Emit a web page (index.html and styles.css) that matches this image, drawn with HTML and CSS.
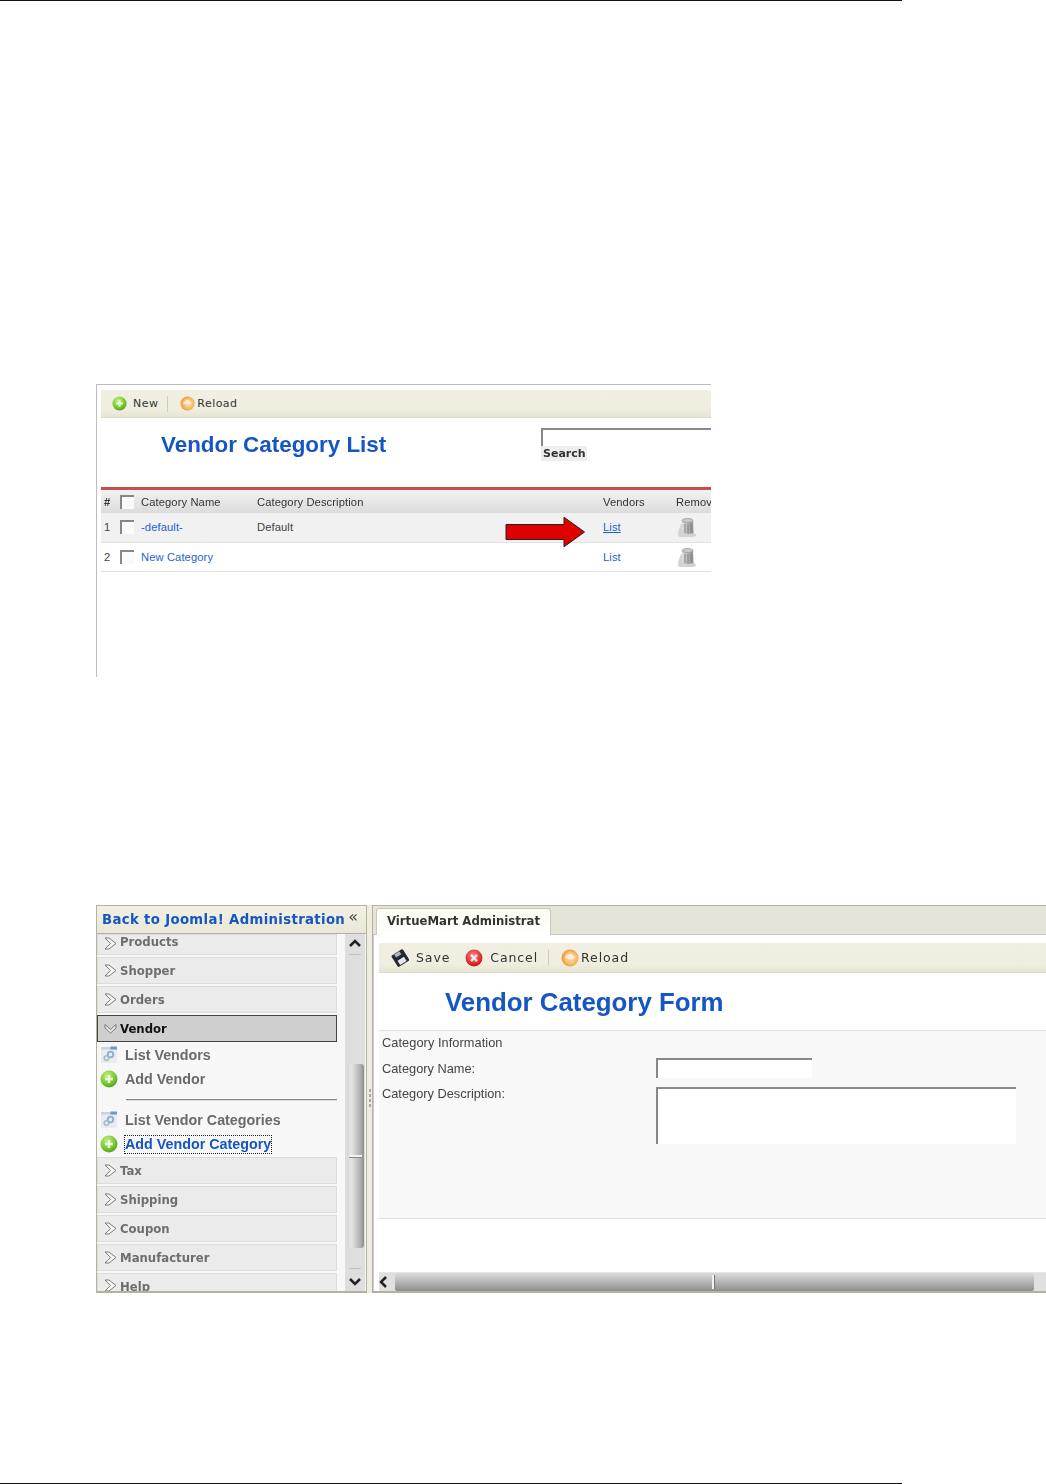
FILE: index.html
```html
<!DOCTYPE html>
<html lang="en">
<head>
<meta charset="utf-8">
<title>Vendor Category</title>
<link rel="stylesheet" href="styles.css">
</head>
<body>
<svg class="defs" width="0" height="0" aria-hidden="true">
  <defs>
    <radialGradient id="gGreen" cx="40%" cy="30%" r="75%"><stop offset="0" stop-color="#c4ee8c"/><stop offset=".6" stop-color="#7ccb2e"/><stop offset="1" stop-color="#4f9f18"/></radialGradient>
    <radialGradient id="gOrange" cx="55%" cy="50%" r="60%"><stop offset="0" stop-color="#fbe3c0"/><stop offset=".55" stop-color="#f8c070"/><stop offset="1" stop-color="#ee8a14"/></radialGradient>
    <radialGradient id="gRed" cx="45%" cy="35%" r="70%"><stop offset="0" stop-color="#f28a8a"/><stop offset=".7" stop-color="#dc2c2c"/><stop offset="1" stop-color="#b01414"/></radialGradient>
    <linearGradient id="gCan" x1="0" x2="1" y1="0" y2="0"><stop offset="0" stop-color="#dcdddc"/><stop offset=".55" stop-color="#b4b6b4"/><stop offset="1" stop-color="#8c8e8c"/></linearGradient>
    <symbol id="i-add" viewBox="0 0 16 16"><circle cx="8" cy="8" r="7.500" fill="url(#gGreen)"/><path d="M8 4.500v7M4.500 8h7" stroke="#eef9df" stroke-width="2.200"/></symbol>
    <symbol id="i-reload" viewBox="0 0 16 16"><circle cx="8" cy="8" r="7.500" fill="url(#gOrange)"/><path d="M3.500 8.500a4.500 4.500 0 0 1 6-4l3 3.500-3.500 1z" fill="#fdf1e0" opacity=".8"/></symbol>
    <symbol id="i-cancel" viewBox="0 0 16 16"><circle cx="8" cy="8" r="7.500" fill="url(#gRed)"/><path d="M5.300 5.300l5.400 5.400M10.700 5.300l-5.400 5.400" stroke="#fbe4e4" stroke-width="2.200"/></symbol>
    <symbol id="i-save" viewBox="0 0 18 18"><g transform="rotate(-32 9 9)"><rect x="2.500" y="2.500" width="13.500" height="13.500" rx="1.500" fill="#26292d"/><rect x="6" y="3" width="6" height="3.500" fill="#aeb7c1"/><rect x="5.500" y="10" width="7.500" height="5" fill="#e4e8ed"/></g></symbol>
    <symbol id="i-list" viewBox="0 0 18 18"><rect x="1" y="1" width="16" height="16" rx="1" fill="#e9ebee"/><rect x="1" y="1" width="16" height="2.500" fill="#cdd2d9"/><rect x="10.500" y="0.500" width="6.500" height="3" fill="#6b9bd0"/><circle cx="10.500" cy="8.500" r="2.800" fill="none" stroke="#8eabc8" stroke-width="1.800"/><circle cx="6.500" cy="12" r="2.300" fill="none" stroke="#a5bbd1" stroke-width="1.600"/></symbol>
    <symbol id="i-trash" viewBox="0 0 20 20"><path d="M1 17c0-3 2-8 4-11l1 10 10-.5 3 2c.5 1.500-1 2.500-3 2.500H3C1.500 20 1 18.500 1 17z" fill="#d2d3d2"/><path d="M5 3.500c2-2.500 9-2.500 11 0L16.500 16c-3 1.500-8 1.500-11 0z" fill="url(#gCan)"/><ellipse cx="10.500" cy="3.500" rx="5.500" ry="2" fill="#c8c9c8" stroke="#939593" stroke-width=".7"/><path d="M8 7v9M11 7v9.500M14 7v8.500" stroke="#7b7d7b" stroke-width=".9"/></symbol>
    <symbol id="i-chev" viewBox="0 0 13 13"><path d="M1 1h4l7 5.500-7 5.500H1l5.500-5.500z" fill="#f6f6f6" stroke="#6f6f6f" stroke-width=".9"/></symbol>
    <symbol id="i-chevd" viewBox="0 0 13 13"><path d="M1 2.500v3.500l5.500 5 5.500-5V2.500L6.500 7.500z" fill="#e8e8e8" stroke="#6f6f6f" stroke-width=".9"/></symbol>
  </defs>
</svg>

<div class="page">
  <header class="page-rule"></header>

  <section class="shot shot-list">
    <div class="toolbar list-toolbar">
      <span class="tool"><svg class="ico16"><use href="#i-add"/></svg><span class="tool-text">New</span></span>
      <span class="sep"></span>
      <span class="tool tool-tight"><svg class="ico16"><use href="#i-reload"/></svg><span class="tool-text">Reload</span></span>
    </div>
    <div class="list-head">
      <h1 class="title list-title">Vendor Category List</h1>
      <div class="search">
        <span class="field search-field"></span>
        <span class="search-label">Search</span>
      </div>
    </div>
    <div class="grid-table">
      <div class="row row-head">
        <span class="c-num"><b>#</b></span><span class="c-check"><i class="check"></i></span><span class="c-name">Category Name</span><span class="c-desc">Category Description</span><span class="c-vend">Vendors</span><span class="c-rem">Remov</span>
      </div>
      <div class="row row-odd">
        <span class="c-num">1</span><span class="c-check"><i class="check"></i></span><span class="c-name link">-default-</span><span class="c-desc">Default</span>
        <span class="c-vend link under">List</span><span class="c-rem"><svg class="trash"><use href="#i-trash"/></svg></span>
        <svg class="arrow" viewBox="0 0 80 32"><path d="M.5 8.500h58V1.200L79 16 58.500 30.800V23.500H.5z" fill="#e00000" stroke="#222" stroke-width="1"/></svg>
      </div>
      <div class="row row-even">
        <span class="c-num">2</span><span class="c-check"><i class="check"></i></span><span class="c-name link">New Category</span><span class="c-desc"></span><span class="c-vend link">List</span><span class="c-rem"><svg class="trash"><use href="#i-trash"/></svg></span>
      </div>
    </div>
  </section>

  <section class="shot shot-form">
    <aside class="side">
      <div class="side-head"><span class="back">Back to Joomla! Administration</span><span class="collapse">«</span></div>
      <div class="side-body">
        <nav class="menu">
          <div class="mi mi-cut-top"><svg class="chev"><use href="#i-chev"/></svg>Products</div>
          <div class="mi"><svg class="chev"><use href="#i-chev"/></svg>Shopper</div>
          <div class="mi"><svg class="chev"><use href="#i-chev"/></svg>Orders</div>
          <div class="mi mi-open"><svg class="chev"><use href="#i-chevd"/></svg>Vendor</div>
          <div class="sub">
            <div class="si si-first"><svg class="ico18"><use href="#i-list"/></svg>List Vendors</div>
            <div class="si"><svg class="ico18"><use href="#i-add"/></svg>Add Vendor</div>
            <div class="si-rule"></div>
            <div class="si"><svg class="ico18"><use href="#i-list"/></svg>List Vendor Categories</div>
            <div class="si"><svg class="ico18"><use href="#i-add"/></svg><span class="si-active">Add Vendor Category</span></div>
          </div>
          <div class="mi"><svg class="chev"><use href="#i-chev"/></svg>Tax</div>
          <div class="mi"><svg class="chev"><use href="#i-chev"/></svg>Shipping</div>
          <div class="mi"><svg class="chev"><use href="#i-chev"/></svg>Coupon</div>
          <div class="mi"><svg class="chev"><use href="#i-chev"/></svg>Manufacturer</div>
          <div class="mi mi-cut-bottom"><svg class="chev"><use href="#i-chev"/></svg>Help</div>
        </nav>
        <div class="vscroll">
          <svg class="sb-arrow" viewBox="0 0 12 8"><path d="M1 7l5-5 5 5" fill="none" stroke="#222" stroke-width="2.500"/></svg>
          <div class="vthumb"><i class="vgrip"></i></div>
          <svg class="sb-arrow" viewBox="0 0 12 8"><path d="M1 1l5 5 5-5" fill="none" stroke="#222" stroke-width="2.500"/></svg>
        </div>
      </div>
    </aside>
    <div class="splitter"><i></i><i></i><i></i><i></i></div>
    <main class="panel">
      <div class="tabs"><span class="tab">VirtueMart Administrat</span></div>
      <div class="panel-body">
        <div class="toolbar form-toolbar">
          <span class="tool"><svg class="ico18"><use href="#i-save"/></svg><span class="tool-text">Save</span></span>
          <span class="tool"><svg class="ico18"><use href="#i-cancel"/></svg><span class="tool-text">Cancel</span></span>
          <span class="sep"></span>
          <span class="tool tool-tight"><svg class="ico18"><use href="#i-reload"/></svg><span class="tool-text">Reload</span></span>
        </div>
        <h1 class="title form-title">Vendor Category Form</h1>
        <div class="form">
          <div class="form-row form-info">Category Information</div>
          <div class="form-row"><span class="label">Category Name:</span><span class="field name-field"></span></div>
          <div class="form-row"><span class="label label-desc">Category Description:</span><span class="field desc-field"></span></div>
        </div>
        <div class="form-foot"></div>
        <div class="hscroll">
          <svg class="sb-arrow-h" viewBox="0 0 8 12"><path d="M7 1 2 6l5 5" fill="none" stroke="#222" stroke-width="2.500"/></svg>
          <div class="hthumb"><i class="hgrip"></i></div>
        </div>
      </div>
    </main>
  </section>

  <footer class="page-rule page-rule-bottom"></footer>
</div>
</body>
</html>
```
FILE: styles.css
```css
* { box-sizing: border-box; }
html, body { margin: 0; padding: 0; background: #fff; }
body { width: 1046px; height: 1484px; overflow: hidden; font-family: "Liberation Sans", Arial, sans-serif; color: #333; }
.defs { display: block; height: 0; }
.page { position: relative; height: 1484px; display: flex; flex-direction: column; }
.page-rule { width: 902px; height: 1px; background: #111; flex: none; }
.page-rule-bottom { margin-top: 190px; }

.shot { flex: none; margin-left: 96px; filter: blur(.45px); }

/* list screenshot */
.shot-list { margin-top: 383px; width: 615px; height: 293px; border-left: 1px solid #bdbdbd; border-top: 1px solid #bdbdbd; padding: 5px 0 0 4px; overflow: hidden; }
.toolbar { display: flex; align-items: center; background: linear-gradient(#f1efe2, #f0eee0 70%, #e6e4d2); border-bottom: 1px solid #dcdbcb; color: #333; font-family: "DejaVu Sans", sans-serif; }
.list-toolbar { height: 28px; padding-left: 11px; font-size: 11px; letter-spacing: .45px; }
.tool { display: flex; align-items: center; gap: 6px; }
.tool-tight { gap: 2px; }
.sep { width: 1px; height: 16px; background: #cfcebd; }
.ico16 { width: 15px; height: 15px; flex: none; }
.ico18 { width: 18px; height: 18px; flex: none; }
.list-toolbar .sep { margin: 0 12px 0 9px; }
.title { margin: 0; color: #1655c4; font-weight: 700; font-family: "Liberation Sans", Arial, sans-serif; }
.list-head { height: 69px; position: relative; display: flex; }
.list-title { font-size: 22.400px; line-height: 27px; margin: 13px 0 0 60px; width: 380px; }
.search { margin-top: 10px; display: flex; flex-direction: column; align-items: flex-start; flex: 1; }
.field { display: block; background: #fff; border-top: 2px solid #888; border-left: 2px solid #888; }
.search-field { width: 100%; height: 18px; }
.search-label { background: #eee; font: 700 11px/15px "DejaVu Sans", sans-serif; color: #333; padding: 0 3px 0 2px; width: 46px; }
.grid-table { border-top: 3px solid #c4504a; }
.row { position: relative; display: grid; grid-template-columns: 16px 21px 116px 346px 73px 1fr; align-items: center; font-size: 11.200px; letter-spacing: .1px; padding-left: 3px; color: #444; white-space: nowrap; }
.row-head { height: 23px; background: linear-gradient(#f2f2f2, #dcdcdc); color: #333; }
.row-odd { height: 30px; padding-bottom: 1px; background: #f1f1f1; border-bottom: 1px solid #e2e2e2; }
.row-even { height: 29px; padding-bottom: 1px; background: #fff; border-bottom: 1px solid #e2e2e2; }
.check { display: block; width: 14px; height: 14px; background: #fafafa; border-top: 2px solid #888; border-left: 2px solid #888; }
.link { color: #1f5fcf; }
.under { text-decoration: underline; }
.trash { display: block; width: 20px; height: 20px; margin-left: 1px; }
.arrow { position: absolute; z-index: 1; left: 404px; top: 3px; width: 81px; height: 32px; }

/* form screenshot */
.shot-form { margin-top: 228px; width: 950px; height: 388px; display: flex; }
.side { width: 271px; flex: none; display: flex; flex-direction: column; border: 1px solid #b4b19f; border-bottom-width: 2px; background: #fff; }
.side-head { height: 28px; flex: none; display: flex; align-items: center; justify-content: space-between; padding: 0 8px 0 5px; background: linear-gradient(#f3f1e4, #e9e7d6); border-bottom: 1px solid #b4b19f; }
.back { font: 700 13.250px/16px "DejaVu Sans", sans-serif; color: #1655c4; white-space: nowrap; letter-spacing: .35px; }
.collapse { font: 400 16px/14px "DejaVu Sans", sans-serif; color: #444; margin-top: -6px; }
.side-body { flex: 1; min-height: 0; display: flex; background: #f7f7f7; }
.menu { width: 240px; flex: none; overflow: hidden; }
.mi { display: flex; align-items: center; gap: 3px; height: 27px; margin-bottom: 2px; padding-left: 6px; background: #ebebeb; border: 1px solid #dcdcdc; font: 700 11.700px/16px "DejaVu Sans", sans-serif; color: #6e6e6e; }
.mi-cut-top { height: 21px; align-items: flex-end; padding-bottom: 4px; }
.mi-cut-bottom { height: 20px; margin-bottom: 0; align-items: flex-start; padding-top: 5px; border-bottom: 0; }
.mi-open { background: #cfcfcf; border: 1px solid #444; color: #111; }
.chev { width: 13px; height: 13px; flex: none; }
.sub { margin-top: -2px; padding: 0 0 1px 3px; }
.si { display: flex; align-items: center; gap: 7px; height: 24px; font: 700 14.300px/17px "Liberation Sans", sans-serif; color: #6a6a6a; }
.si-first { margin-top: 3px; }
.si-rule { height: 1px; margin: 8px 0 8px 26px; background: #888; box-shadow: 0 1px 0 #ddd; }
.si-active { color: #1655c4; outline: 1px dotted #222; }
.vscroll { width: 20px; margin-left: 8px; display: flex; flex-direction: column; align-items: center; justify-content: space-between; background: #dedede; padding: 5px 0 5px; position: relative; }
.vscroll::before, .vscroll::after { content: ""; position: absolute; left: 4px; width: 12px; height: 1px; background: #c2c2c2; }
.vscroll::before { top: 20px; }
.vscroll::after { bottom: 22px; }
.sb-arrow { width: 12px; height: 8px; flex: none; }
.vthumb { position: absolute; top: 130px; left: 2px; right: 1px; height: 184px; border-radius: 3px; background: linear-gradient(90deg, #d5d5d5, #e6e6e6 25%, #a8a8a8 85%, #8a8a8a); }
.vgrip { position: absolute; top: 91px; left: 2px; right: 2px; height: 2px; background: #f2f2f2; box-shadow: 0 1px 0 #888; }
.splitter { width: 5px; flex: none; background: #eeedde; display: flex; flex-direction: column; justify-content: center; align-items: center; gap: 2px; padding-bottom: 3px; }
.splitter i { width: 2px; height: 3px; background: #a8a8a0; }
.panel { flex: 1; min-width: 0; display: flex; flex-direction: column; border: 1px solid #b4b19f; border-bottom-width: 2px; border-right: 0; background: #fff; }
.tabs { height: 29px; flex: none; display: flex; align-items: flex-end; padding-left: 3px; background: #e4e4d8; border-bottom: 1px solid #c8c8bb; }
.tab { height: 27px; width: 175px; margin-bottom: -1px; padding-bottom: 2px; display: flex; align-items: center; justify-content: center; background: linear-gradient(#fbfbf0, #fff); border: 1px solid #c8c8bb; border-bottom: 0; border-radius: 3px 3px 0 0; font: 700 11.700px/14px "DejaVu Sans", sans-serif; color: #333; white-space: nowrap; }
.panel-body { flex: 1; min-height: 0; display: flex; flex-direction: column; padding: 8px 0 0 5px; border-left: 1px solid #ccc; }
.form-toolbar { height: 30px; flex: none; padding-left: 12px; font-size: 12.500px; letter-spacing: .9px; }
.form-toolbar .tool { gap: 7px; margin-right: 15px; }
.form-toolbar .tool-tight { gap: 2px; margin-right: 0; }
.form-toolbar .sep { height: 16px; margin: 0 12px 0 -5px; }
.form-title { flex: none; height: 58px; padding: 14px 0 0 66px; font-size: 25.850px; line-height: 30px; border-bottom: 1px solid #e0e0e0; }
.form { flex: none; height: 187px; background: #f8f8f8; padding: 4px 0 0 3px; font-size: 12.800px; color: #444; }
.form-row { display: flex; align-items: flex-start; }
.form-info { height: 24px; line-height: 15px; letter-spacing: .05px; }
.form-row + .form-row { line-height: 15px; }
.label { width: 274px; flex: none; padding-top: 2px; }
.label-desc { margin-top: -1px; padding-top: 0; }
.name-field { width: 156px; height: 20px; margin: -1px 0 9px; }
.desc-field { width: 360px; height: 57px; }
.form-foot { flex: none; height: 54px; border-top: 1px solid #ddd; background: #fff; }
.hscroll { flex: 1; min-height: 0; display: flex; align-items: center; background: #e0e0e0; border-top: 1px solid #e6e6e6; gap: 8px; }
.sb-arrow-h { width: 8px; height: 12px; flex: none; }
.hthumb { position: relative; width: 639px; height: 18px; border-radius: 2px; background: linear-gradient(#dcdcdc, #bdbdbd 40%, #8e8e8e); }
.hgrip { position: absolute; left: 317px; top: 2px; width: 2px; height: 14px; background: #f2f2f2; box-shadow: 1px 0 0 #777; }
```
